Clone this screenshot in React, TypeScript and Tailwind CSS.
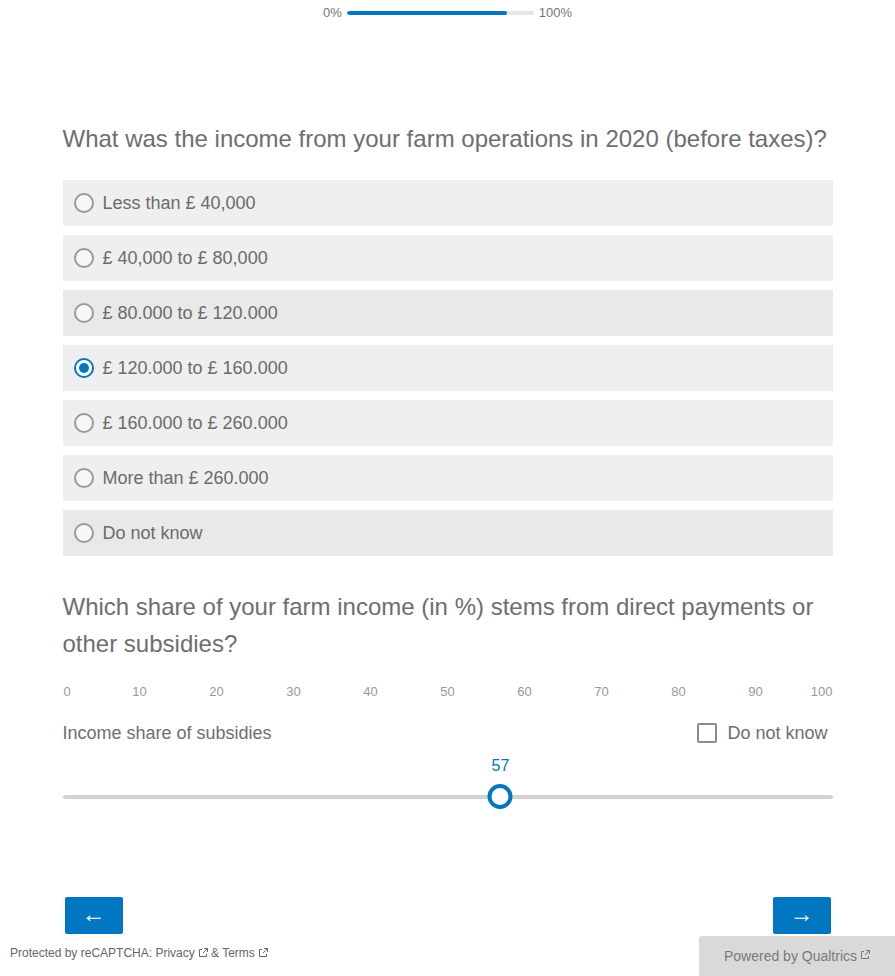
import React from 'react';

const options = [
  { label: 'Less than £ 40,000', dark: false },
  { label: '£ 40,000 to £ 80,000', dark: false },
  { label: '£ 80.000 to £ 120.000', dark: true },
  { label: '£ 120.000 to £ 160.000', dark: false, checked: true },
  { label: '£ 160.000 to £ 260.000', dark: false },
  { label: 'More than £ 260.000', dark: false },
  { label: 'Do not know', dark: true },
];

const ticks = [0, 10, 20, 30, 40, 50, 60, 70, 80, 90, 100];

function ExternalIcon() {
  return (
    <svg width="10" height="10" viewBox="0 0 10 10" className="inline-block ml-[3px] -mt-[2px]" fill="none" stroke="currentColor" strokeWidth="1">
      <path d="M4 1.5H1.5v7h7V6" />
      <path d="M6 0.5h3.5V4M9.5 0.5L5 5" />
    </svg>
  );
}

export default function App() {
  const value = 57;

  return (
    <div className="min-h-[976px] bg-white flex flex-col" style={{ fontFamily: '"Liberation Sans", Arial, sans-serif' }}>
      {/* Progress */}
      <div className="h-[26px] flex items-center justify-center gap-[5px] text-[13px] text-[#757575]">
        <span>0%</span>
        <div className="w-[187px] h-[4px] bg-[#e6e6e6] rounded-full overflow-hidden">
          <div className="h-full w-[160px] bg-[#0077c0] rounded-full" />
        </div>
        <span>100%</span>
      </div>

      <div className="w-[770px] mx-auto mt-[94px]">
        {/* Question 1 */}
        <h1 className="text-[24px] leading-[37px] text-[#6e6e6e] mb-[23px]">
          What was the income from your farm operations in 2020 (before taxes)?
        </h1>
        <div className="flex flex-col gap-[9px]">
          {options.map(o => (
            <div
              key={o.label}
              className={`h-[46px] flex items-center pl-[11px] gap-[9px] ${o.dark ? 'bg-[#e9e9e9]' : 'bg-[#efefef]'}`}
            >
              {o.checked ? (
                <span className="w-[20px] h-[20px] rounded-full border-2 border-[#0077c0] bg-white flex items-center justify-center">
                  <span className="w-[10px] h-[10px] rounded-full bg-[#0077c0]" />
                </span>
              ) : (
                <span className="w-[20px] h-[20px] rounded-full border-2 border-[#9a9a9a] bg-[#f7f7f7]" />
              )}
              <span className="text-[18px] text-[#6b6b6b]">{o.label}</span>
            </div>
          ))}
        </div>

        {/* Question 2 */}
        <h2 className="text-[24px] leading-[37px] text-[#6e6e6e] mt-[32px]">
          Which share of your farm income (in %) stems from direct payments or other subsidies?
        </h2>

        <div className="flex justify-between text-[13px] leading-[16px] text-[#999999] mt-[22px]">
          {ticks.map(t => (
            <span
              key={t}
              className={`w-0 flex whitespace-nowrap ${t === 0 ? 'justify-start' : t === 100 ? 'justify-end' : 'justify-center'}`}
            >
              <span className={t === 0 ? 'pl-[1px]' : ''}>{t}</span>
            </span>
          ))}
        </div>

        <div className="flex items-center justify-between mt-[23px] h-[20px]">
          <span className="text-[18px] text-[#6e6e6e]">Income share of subsidies</span>
          <label className="flex items-center gap-[10px] pr-[5px]">
            <span className="w-[20px] h-[20px] rounded-[2px] border-2 border-[#8c8c8c] bg-white" />
            <span className="text-[18px] text-[#6e6e6e]">Do not know</span>
          </label>
        </div>

        {/* Slider */}
        <div className="relative h-[54px] mt-[13px]">
          <div className="absolute left-0 right-0 top-[39px] h-[4px] rounded-full bg-[#d2d2d2]" />
          <div className="absolute top-0 -translate-x-1/2 flex flex-col items-center" style={{ left: `${value * 7.63 + 3}px` }}>
            <span className="text-[16px] leading-[20px] text-[#0077c0]">{value}</span>
            <span className="mt-[8px] w-[25px] h-[25px] rounded-full border-[4px] border-[#0077c0] bg-white" />
          </div>
        </div>

        {/* Nav buttons */}
        <div className="flex justify-between px-[2px] mt-[87px]">
          <button className="w-[58px] h-[37px] rounded-[2px] bg-[#0077c0] text-white text-[24px] leading-none pb-[3px] flex items-center justify-center">
            ←
          </button>
          <button className="w-[58px] h-[37px] rounded-[2px] bg-[#0077c0] text-white text-[24px] leading-none pb-[3px] flex items-center justify-center">
            →
          </button>
        </div>
      </div>

      {/* Footer */}
      <div className="flex justify-between items-start mt-[2px]">
        <div className="pl-[10px] pt-[8px] text-[12px] text-[#666666]">
          Protected by reCAPTCHA: Privacy
          <ExternalIcon /> &amp; Terms
          <ExternalIcon />
        </div>
        <div className="w-[196px] h-[40px] bg-[#d9d9d9] rounded-tl-[3px] flex items-center justify-center text-[14px] text-[#7a7a7a]">
          Powered by Qualtrics
          <ExternalIcon />
        </div>
      </div>
    </div>
  );
}
